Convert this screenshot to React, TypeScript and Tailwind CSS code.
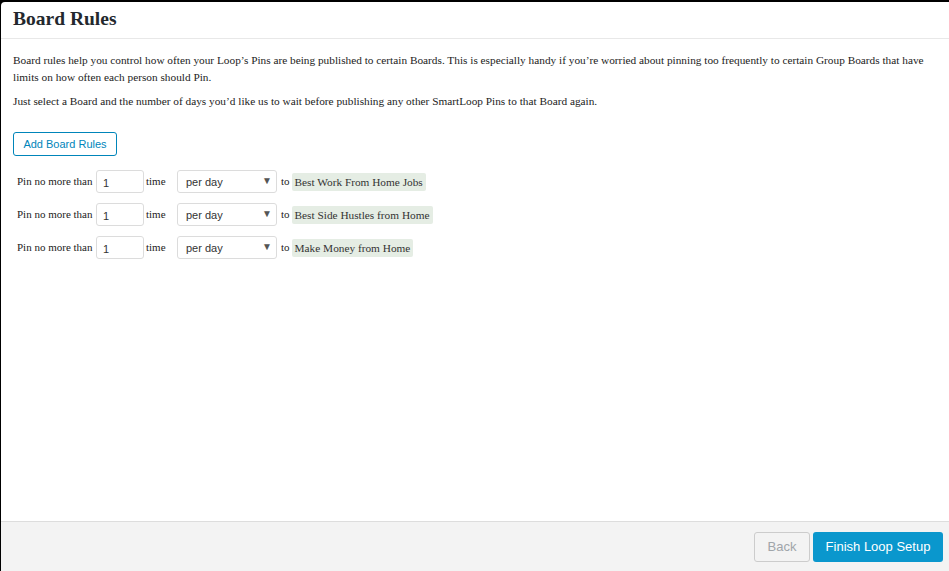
const boards = [
  "Best Work From Home Jobs",
  "Best Side Hustles from Home",
  "Make Money from Home",
];

function RuleRow({ board }: { board: string }) {
  return (
    <div className="flex h-[23px] items-center text-[11px] text-[#222]">
      <span className="w-[79px]">Pin no more than</span>
      <input
        defaultValue="1"
        className="h-[23px] w-[48px] rounded-[3px] border border-[#dcdcdc] px-[6px] pt-[2px] font-['Liberation_Sans',sans-serif] text-[11px] text-[#333] outline-none"
      />
      <span className="ml-[2px] w-[31px]">time</span>
      <div className="relative h-[23px] w-[100px]">
        <select className="h-[23px] w-full appearance-none rounded-[3px] border border-[#dcdcdc] bg-white pl-[8px] pt-[2px] font-['Liberation_Sans',sans-serif] text-[11px] text-[#333] outline-none">
          <option>per day</option>
          <option>per week</option>
          <option>per month</option>
        </select>
        <span className="pointer-events-none absolute right-[5px] top-[5px] text-[10px] leading-[12px] text-[#555]">▼</span>
      </div>
      <span className="ml-[4px] mr-[2px]">to</span>
      <span className="rounded-[2px] bg-[#e5ede4] px-[3px] py-[2px] text-[11.3px] leading-[14px] text-[#333]">
        {board}
      </span>
    </div>
  );
}

export default function App() {
  return (
    <div className="h-[571px] w-[949px] bg-black pt-[2px]">
      <div className="ml-px flex h-[569px] flex-col overflow-hidden rounded-tl-[4px] bg-white font-['Liberation_Serif',serif]">
        <div className="h-[37px] border-b border-[#e8e8e8] pl-[12px] pt-[5px]">
          <h1 className="text-[19.5px] font-bold leading-[24px] text-[#23282d]">Board Rules</h1>
        </div>

        <div className="flex-1 pl-[12px] pr-[8px] pt-[13px] text-[11.3px] text-[#222]">
          <p className="leading-[17px]">
            Board rules help you control how often your Loop’s Pins are being published to certain Boards.
            This is especially handy if you’re worried about pinning too frequently to certain Group Boards
            that have limits on how often each person should Pin.
          </p>
          <p className="mt-[7px] leading-[17px]">
            Just select a Board and the number of days you’d like us to wait before publishing any other
            SmartLoop Pins to that Board again.
          </p>

          <button className="mt-[22px] h-[24px] w-[104px] rounded-[3px] border border-[#0085ba] font-['Liberation_Sans',sans-serif] text-[11px] text-[#0085ba]">
            Add Board Rules
          </button>

          <div className="mt-[14px] flex flex-col gap-[10px] pl-[4px]">
            {boards.map((b) => (
              <RuleRow key={b} board={b} />
            ))}
          </div>
        </div>

        <div className="flex h-[50px] items-center justify-end gap-[3px] border-t border-[#dddddd] bg-[#f3f3f3] pr-[6px]">
          <button className="h-[30px] w-[56px] rounded-[3px] border border-[#cccccc] font-['Liberation_Sans',sans-serif] text-[13px] text-[#a0a5aa]">
            Back
          </button>
          <button className="h-[30px] w-[130px] rounded-[3px] bg-[#0a97cd] font-['Liberation_Sans',sans-serif] text-[13px] text-white">
            Finish Loop Setup
          </button>
        </div>
      </div>
    </div>
  );
}
